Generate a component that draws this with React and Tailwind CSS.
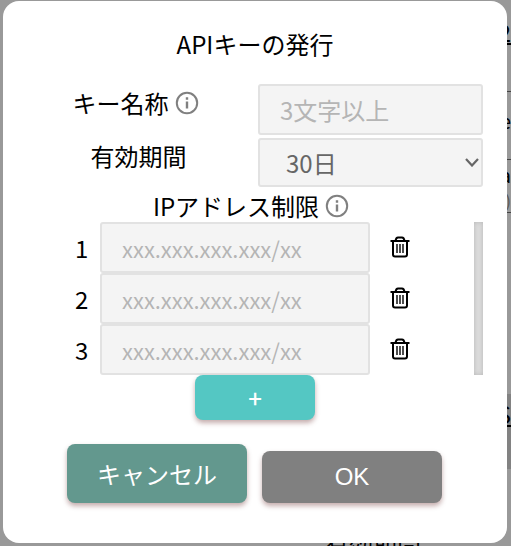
import { useState } from 'react';

const FONT = "font-['Noto_Sans_CJK_JP',sans-serif]";
const FIELD = 'rounded-[3px] border-2 border-[#e2e2e2] bg-[#f4f4f4] text-[#666] placeholder:text-[#b5b5b5] outline-none';
const BUTTON = 'rounded-lg text-2xl text-white shadow-[0_3px_5px_rgba(90,20,20,0.35)]';

function InfoIcon() {
  return (
    <svg viewBox="0 0 24 24" className="mx-1.5 size-6 shrink-0" fill="none" stroke="#808080" strokeWidth="2" aria-hidden="true">
      <circle cx="12" cy="12" r="10.2" />
      <path d="M12 10.5v7M12 6.3v2.4" strokeWidth="2.4" />
    </svg>
  );
}

function TrashIcon() {
  return (
    <svg viewBox="0 0 20 22" className="h-[22px] w-5" fill="none" stroke="#000" strokeWidth="2" aria-hidden="true">
      <path d="M.5 5h19M5.5 5Q6 1.500 8 1.500h4Q14 1.500 14.500 5" />
      <path d="M3 5v13.500q0 2 2 2h10q2 0 2-2V5" />
      <path d="M7 8v9M10 8v9M13 8v9" strokeWidth="1.4" />
    </svg>
  );
}

// Page content that stays visible around the dialog
function PageBehind() {
  return (
    <div className="absolute inset-0 overflow-hidden" aria-hidden="true">
      <span className="absolute right-0 top-5 text-2xl leading-6 underline decoration-2">2</span>
      <div className="absolute right-0 top-[91px] w-6 border-t border-[#444]" />
      <span className="absolute right-0 top-[109px] text-xl leading-6">e</span>
      <div className="absolute right-0 top-[159px] w-6 border-t border-[#444]" />
      <span className="absolute right-0 top-[163px] text-xl leading-6">a</span>
      <span className="absolute right-0 top-[190px] text-base leading-5 text-[#555]">)</span>
      <div className="absolute right-0 top-[212px] w-6 border-t border-[#444]" />
      <div className="absolute right-0 top-[394px] h-[75px] w-6 bg-[#828282]" />
      <span className="absolute right-0 top-[402px] text-2xl leading-6 underline decoration-2">S</span>
      <span className="absolute left-[325px] top-[528px] text-2xl leading-8">有効期間</span>
    </div>
  );
}

export default function App() {
  const [name, setName] = useState('');
  const [period, setPeriod] = useState('30');
  const [addresses, setAddresses] = useState(['', '', '']);

  const updateAddress = (index, value) =>
    setAddresses(addresses.map((address, i) => (i === index ? value : address)));
  const removeAddress = (index) => setAddresses(addresses.filter((_, i) => i !== index));

  return (
    <div className={`relative min-h-screen bg-[#999] pt-px pr-1 pb-[3px] pl-[3px] text-black ${FONT}`}>
      <PageBehind />
      <div role="dialog" aria-labelledby="dialog-title" className="relative rounded-2xl bg-white pt-[27px] pr-6 pb-10 pl-16">
        <h1 id="dialog-title" className="mb-6 pr-10 text-center text-2xl leading-8">APIキーの発行</h1>

        <div className="grid grid-cols-[1fr_225px] gap-x-12 gap-y-[3px]">
          <label htmlFor="key-name" className="flex items-center justify-center pb-3.5 text-2xl whitespace-nowrap">
            キー名称
            <InfoIcon />
          </label>
          <input
            id="key-name"
            className={`h-[51px] w-full px-5 text-2xl ${FIELD}`}
            placeholder="3文字以上"
            value={name}
            onChange={(e) => setName(e.target.value)}
          />
          <label htmlFor="period" className="flex items-center justify-center pb-3.5 text-2xl whitespace-nowrap">
            有効期間
          </label>
          <div className="relative">
            <select
              id="period"
              className={`h-[49px] w-full appearance-none px-[26px] text-2xl ${FIELD}`}
              value={period}
              onChange={(e) => setPeriod(e.target.value)}
            >
              <option value="30">30日</option>
              <option value="60">60日</option>
              <option value="90">90日</option>
            </select>
            <svg viewBox="0 0 14 9" className="pointer-events-none absolute top-5 right-1 h-[9px] w-3.5" fill="none" stroke="#666" strokeWidth="2.2" aria-hidden="true">
              <path d="M1 1l6 6.500L13 1" />
            </svg>
          </div>
        </div>

        <h2 className="flex h-[35px] items-center justify-center pt-0.5 pr-[42px] text-2xl leading-8">
          IPアドレス制限
          <InfoIcon />
        </h2>

        <div className="flex">
          <ul className="grow">
            {addresses.map((address, index) => (
              <li key={index} className="flex items-center">
                <label htmlFor={`ip-${index}`} className="w-[33px] pl-2 text-2xl">{index + 1}</label>
                <input
                  id={`ip-${index}`}
                  className={`h-[51px] w-[270px] px-5 text-[22px] ${FIELD}`}
                  placeholder="xxx.xxx.xxx.xxx/xx"
                  value={address}
                  onChange={(e) => updateAddress(index, e.target.value)}
                />
                <button type="button" aria-label={`${index + 1}を削除`} className="ml-5 pb-0.5" onClick={() => removeAddress(index)}>
                  <TrashIcon />
                </button>
              </li>
            ))}
          </ul>
          <div className="w-[9px] bg-[#dcdcdc] shadow-[inset_0_0_5px_#b8b8b8]" />
        </div>

        <div className="flex justify-center pr-10">
          <button
            type="button"
            className={`h-[45px] w-[120px] bg-[#54c7c3] font-medium ${BUTTON}`}
            onClick={() => setAddresses([...addresses, ''])}
          >
            +
          </button>
        </div>

        <div className="mt-6 flex items-end justify-center gap-[15px] pr-[41px]">
          <button type="button" className={`h-[59px] w-[180px] bg-[#63988e] ${BUTTON}`}>キャンセル</button>
          <button type="button" className={`h-[52px] w-[180px] bg-[#808080] font-['Liberation_Sans',sans-serif] ${BUTTON}`}>OK</button>
        </div>
      </div>
    </div>
  );
}
